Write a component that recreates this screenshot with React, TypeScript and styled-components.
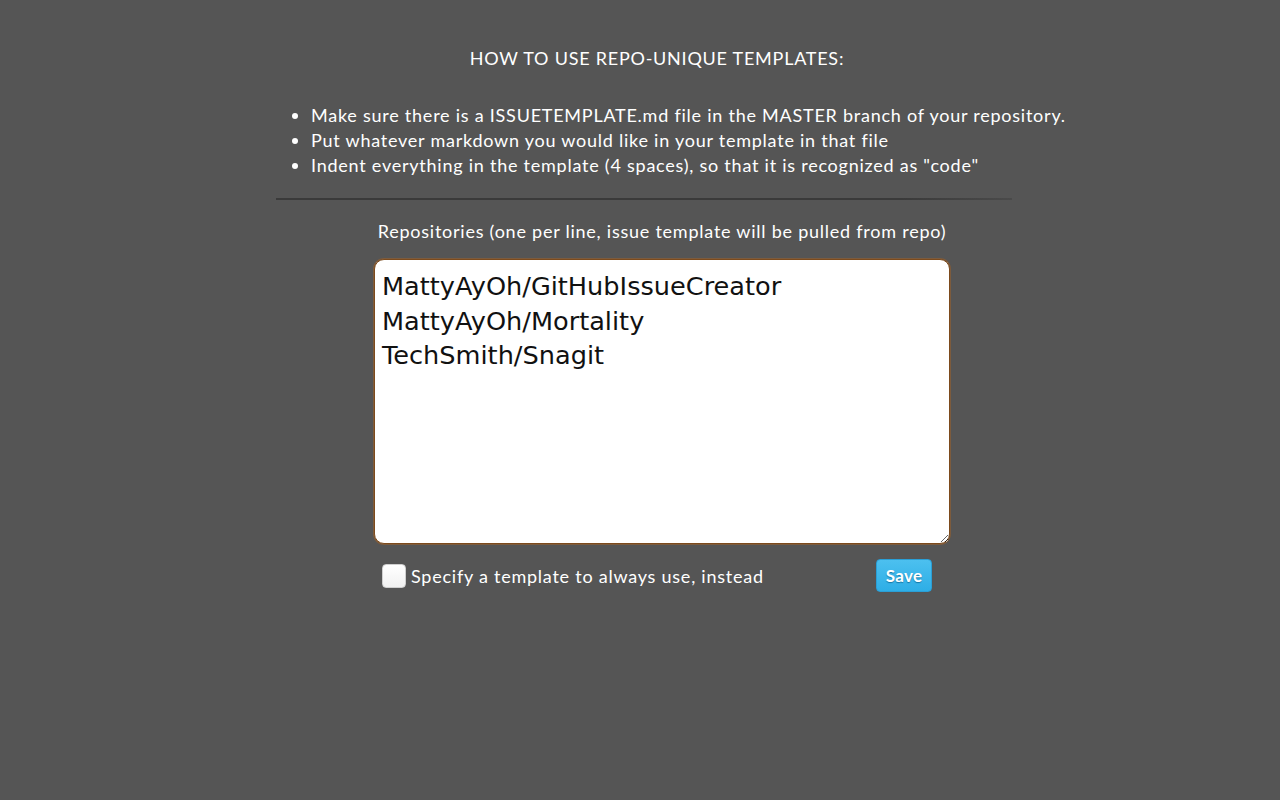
import styled, { createGlobalStyle } from 'styled-components';

const GlobalStyle = createGlobalStyle`
  html, body {
    margin: 0;
    padding: 0;
    background: #555555;
  }

  body {
    font-family: Lato, 'Noto Sans', sans-serif;
    letter-spacing: 0.76px;
    color: #ffffff;
  }
`;

const StyledWrapper = styled.div`
  width: 736px;
  margin-left: calc(50% - 364px);
  padding-top: 46px;
`;

const StyledHeading = styled.h1`
  margin: 0;
  padding-left: 26px;
  text-align: center;
  font-size: 18px;
  line-height: 24px;
  font-weight: 400;
`;

const StyledList = styled.ul`
  margin: 33px 0 0;
  padding-left: 35px;
  white-space: nowrap;
  font-size: 18px;
  line-height: 25px;
`;

const StyledRule = styled.hr`
  margin: 20px 0 0;
  border: 0;
  height: 2px;
  background: linear-gradient(to right, #3a3a3a, #3a3a3a 85%, #4a4a4a);
`;

const StyledForm = styled.form`
  width: 576px;
  margin: 19px 0 0 98px;
`;

const StyledLabel = styled.label`
  display: block;
  text-align: center;
  font-size: 18px;
  line-height: 24px;
`;

const StyledTextarea = styled.textarea`
  display: block;
  box-sizing: border-box;
  width: 576px;
  height: 285px;
  margin-top: 16px;
  padding: 9px 7px 6px;
  border: 1px solid #7c4a1c;
  border-radius: 10px;
  box-shadow: 0 0 0 1px rgba(150, 95, 45, 0.6);
  background: #ffffff;
  color: #111111;
  font-family: 'DejaVu Sans', Verdana, sans-serif;
  font-size: 25.6px;
  letter-spacing: 0;
  line-height: 34.5px;
  resize: vertical;
  outline: none;
`;

const StyledRow = styled.div`
  display: flex;
  align-items: center;
  justify-content: space-between;
  margin-top: 15px;
  padding: 0 18px 0 8px;
`;

const StyledCheckLabel = styled.label`
  display: flex;
  align-items: center;
  gap: 5px;
  font-size: 18px;
  line-height: 24px;
`;

const StyledCheckbox = styled.span`
  width: 22px;
  height: 22px;
  border: 1px solid #cfcfcf;
  border-radius: 4px;
  background: linear-gradient(#ffffff, #f1f1f1);
`;

const StyledButton = styled.button`
  width: 56px;
  height: 33px;
  border: 1px solid #2a9fd6;
  border-radius: 4px;
  background: linear-gradient(#4cc0ef, #2eaee6);
  color: #ffffff;
  font-family: Lato, sans-serif;
  font-weight: 700;
  font-size: 17px;
  letter-spacing: 0.3px;
  text-shadow: 0 1px 1px rgba(0, 80, 120, 0.6);
  cursor: pointer;
`;

const repos = 'MattyAyOh/GitHubIssueCreator\nMattyAyOh/Mortality\nTechSmith/Snagit';

const App = () => (
  <>
    <GlobalStyle />
    <StyledWrapper>
      <StyledHeading>HOW TO USE REPO-UNIQUE TEMPLATES:</StyledHeading>
      <StyledList>
        <li>Make sure there is a ISSUETEMPLATE.md file in the MASTER branch of your repository.</li>
        <li>Put whatever markdown you would like in your template in that file</li>
        <li>Indent everything in the template (4 spaces), so that it is recognized as &quot;code&quot;</li>
      </StyledList>
      <StyledRule />
      <StyledForm>
        <StyledLabel htmlFor="repos">
          Repositories (one per line, issue template will be pulled from repo)
        </StyledLabel>
        <StyledTextarea id="repos" defaultValue={repos} spellCheck={false} />
        <StyledRow>
          <StyledCheckLabel>
            <StyledCheckbox />
            Specify a template to always use, instead
          </StyledCheckLabel>
          <StyledButton type="button">Save</StyledButton>
        </StyledRow>
      </StyledForm>
    </StyledWrapper>
  </>
);

export default App;
